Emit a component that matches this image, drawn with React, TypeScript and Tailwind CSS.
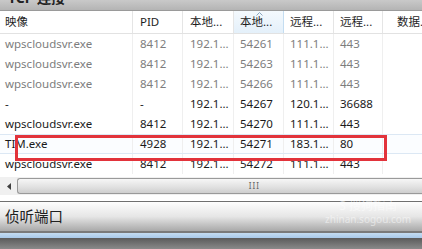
type Row = {
    name: string;
    pid: string;
    localAddr: string;
    localPort: string;
    remoteAddr: string;
    remotePort: string;
    closed?: boolean;
    hot?: boolean;
};

const rows: Row[] = [
    { name: "wpscloudsvr.exe", pid: "8412", localAddr: "192.1...", localPort: "54261", remoteAddr: "111.1...", remotePort: "443", closed: true },
    { name: "wpscloudsvr.exe", pid: "8412", localAddr: "192.1...", localPort: "54263", remoteAddr: "111.1...", remotePort: "443", closed: true },
    { name: "wpscloudsvr.exe", pid: "8412", localAddr: "192.1...", localPort: "54266", remoteAddr: "111.1...", remotePort: "443", closed: true },
    { name: "-", pid: "-", localAddr: "192.1...", localPort: "54267", remoteAddr: "120.1...", remotePort: "36688" },
    { name: "wpscloudsvr.exe", pid: "8412", localAddr: "192.1...", localPort: "54270", remoteAddr: "111.1...", remotePort: "443" },
    { name: "TIM.exe", pid: "4928", localAddr: "192.1...", localPort: "54271", remoteAddr: "183.1...", remotePort: "80", hot: true },
    { name: "wpscloudsvr.exe", pid: "8412", localAddr: "192.1...", localPort: "54272", remoteAddr: "111.1...", remotePort: "443" },
];

const cols = "grid grid-cols-[133px_50px_51px_50px_50px_49px_39px]";
const font = "font-['Noto_Sans','Noto_Sans_CJK_SC',sans-serif]";

export default function App() {
    return (
        <div className={`relative flex h-[249px] w-[422px] flex-col overflow-hidden bg-white ${font}`}>
            {/* section title, scrolled mostly out of view */}
            <div className="h-[11px] shrink-0 overflow-hidden border-b border-[#9a9a9a] bg-gradient-to-b from-[#c9c9c9] to-[#b4b4b4] pl-[8px]">
                <div className="-mt-[11px] text-[14px] font-bold leading-[18px] text-[#222]">TCP 连接</div>
            </div>

            {/* header */}
            <div className={`${cols} h-[23px] shrink-0 border-b border-[#e2e2e2] text-[11.5px] text-[#1e1e1e]`}>
                <div className="flex items-center border-r border-[#e5e5e5] pl-[5px]">映像</div>
                <div className="flex items-center border-r border-[#e5e5e5] pl-[7px]">PID</div>
                <div className="flex items-center border-r border-[#e5e5e5] pl-[7px]">本地...</div>
                <div className="relative flex items-center border-r border-[#c4ddf1] bg-gradient-to-b from-[#f4f9fd] to-[#e4f0fa] pl-[6px]">
                    本地...
                    <svg className="absolute left-[22px] top-[1px]" width="7" height="4" viewBox="0 0 7 4">
                        <path d="M0.5 3.5 L3.5 0.5 L6.5 3.5" fill="none" stroke="#8aa7c0" strokeWidth="1" />
                    </svg>
                </div>
                <div className="flex items-center border-r border-[#e5e5e5] pl-[6px]">远程...</div>
                <div className="flex items-center border-r border-[#e5e5e5] pl-[6px]">远程...</div>
                <div className="flex items-center whitespace-nowrap pl-[14px]">数据...</div>
            </div>

            {/* rows */}
            <div className="flex shrink-0 flex-col">
                {rows.map((r, i) => (
                    <div
                        key={i}
                        className={`${cols} h-[20px] text-[11.5px] ${r.closed ? "text-[#7d7d7d]" : "text-[#1a1a1a]"} ${
                            r.hot ? "border-y border-[#dce8f4] bg-[#fbfdff]" : ""
                        }`}
                    >
                        <div className="flex items-center border-r border-[#efefef] pl-[5px]">{r.name}</div>
                        <div className="flex items-center border-r border-[#efefef] pl-[7px]">{r.pid}</div>
                        <div className="flex items-center border-r border-[#efefef] pl-[7px]">{r.localAddr}</div>
                        <div className="flex items-center border-r border-[#efefef] pl-[6px]">{r.localPort}</div>
                        <div className="flex items-center border-r border-[#efefef] pl-[6px]">{r.remoteAddr}</div>
                        <div className="flex items-center border-r border-[#efefef] pl-[6px]">{r.remotePort}</div>
                        <div />
                    </div>
                ))}
            </div>

            {/* horizontal scrollbar */}
            <div className="mt-[3px] flex h-[18px] shrink-0 items-center bg-[#f0f0f0]">
                <div className="flex w-[17px] items-center justify-center">
                    <svg width="4" height="7" viewBox="0 0 4 7">
                        <path d="M4 0 L0 3.5 L4 7 Z" fill="#404040" />
                    </svg>
                </div>
                <div className="flex h-[16px] flex-1 items-center justify-end rounded-l-[3px] border border-r-0 border-[#9a9a9a] bg-gradient-to-b from-[#f6f6f6] via-[#e4e4e4] to-[#cfcfcf] pr-[162px]">
                    <span className="text-[8px] leading-none tracking-[1px] text-[#666]">III</span>
                </div>
            </div>

            <div className="h-[6px] shrink-0 bg-white" />

            {/* listening ports section */}
            <div className="h-[30px] shrink-0 border-t border-[#6f6f6f] bg-gradient-to-b from-[#fdfdfd] via-[#e6e6e6] to-[#a9a9a9] pl-[5px]">
                <div className="pt-[3px] text-[14.5px] leading-[22px] text-[#202020]">侦听端口</div>
            </div>
            <div className="h-[2px] shrink-0 bg-[#7a7a7a]" />
            <div className="h-[5px] shrink-0 bg-gradient-to-b from-[#c4dcf2] to-[#a9c9e9]" />
            <div className="flex-1 bg-gradient-to-b from-[#5b5b5b] to-[#8a8a8a]" />

            {/* highlight box drawn over the TIM row */}
            <div className="pointer-events-none absolute left-[15px] top-[135px] h-[26px] w-[372px] border-[3px] border-[#e2333b]" />

            {/* watermark */}
            <div className="pointer-events-none absolute left-[325px] top-[199px] flex flex-col items-center text-white/50">
                <span className="text-[12px] leading-[14px]">S 搜狗指南</span>
                <span className="text-[10px] leading-[12px]">zhinan.sogou.com</span>
            </div>
        </div>
    );
}
